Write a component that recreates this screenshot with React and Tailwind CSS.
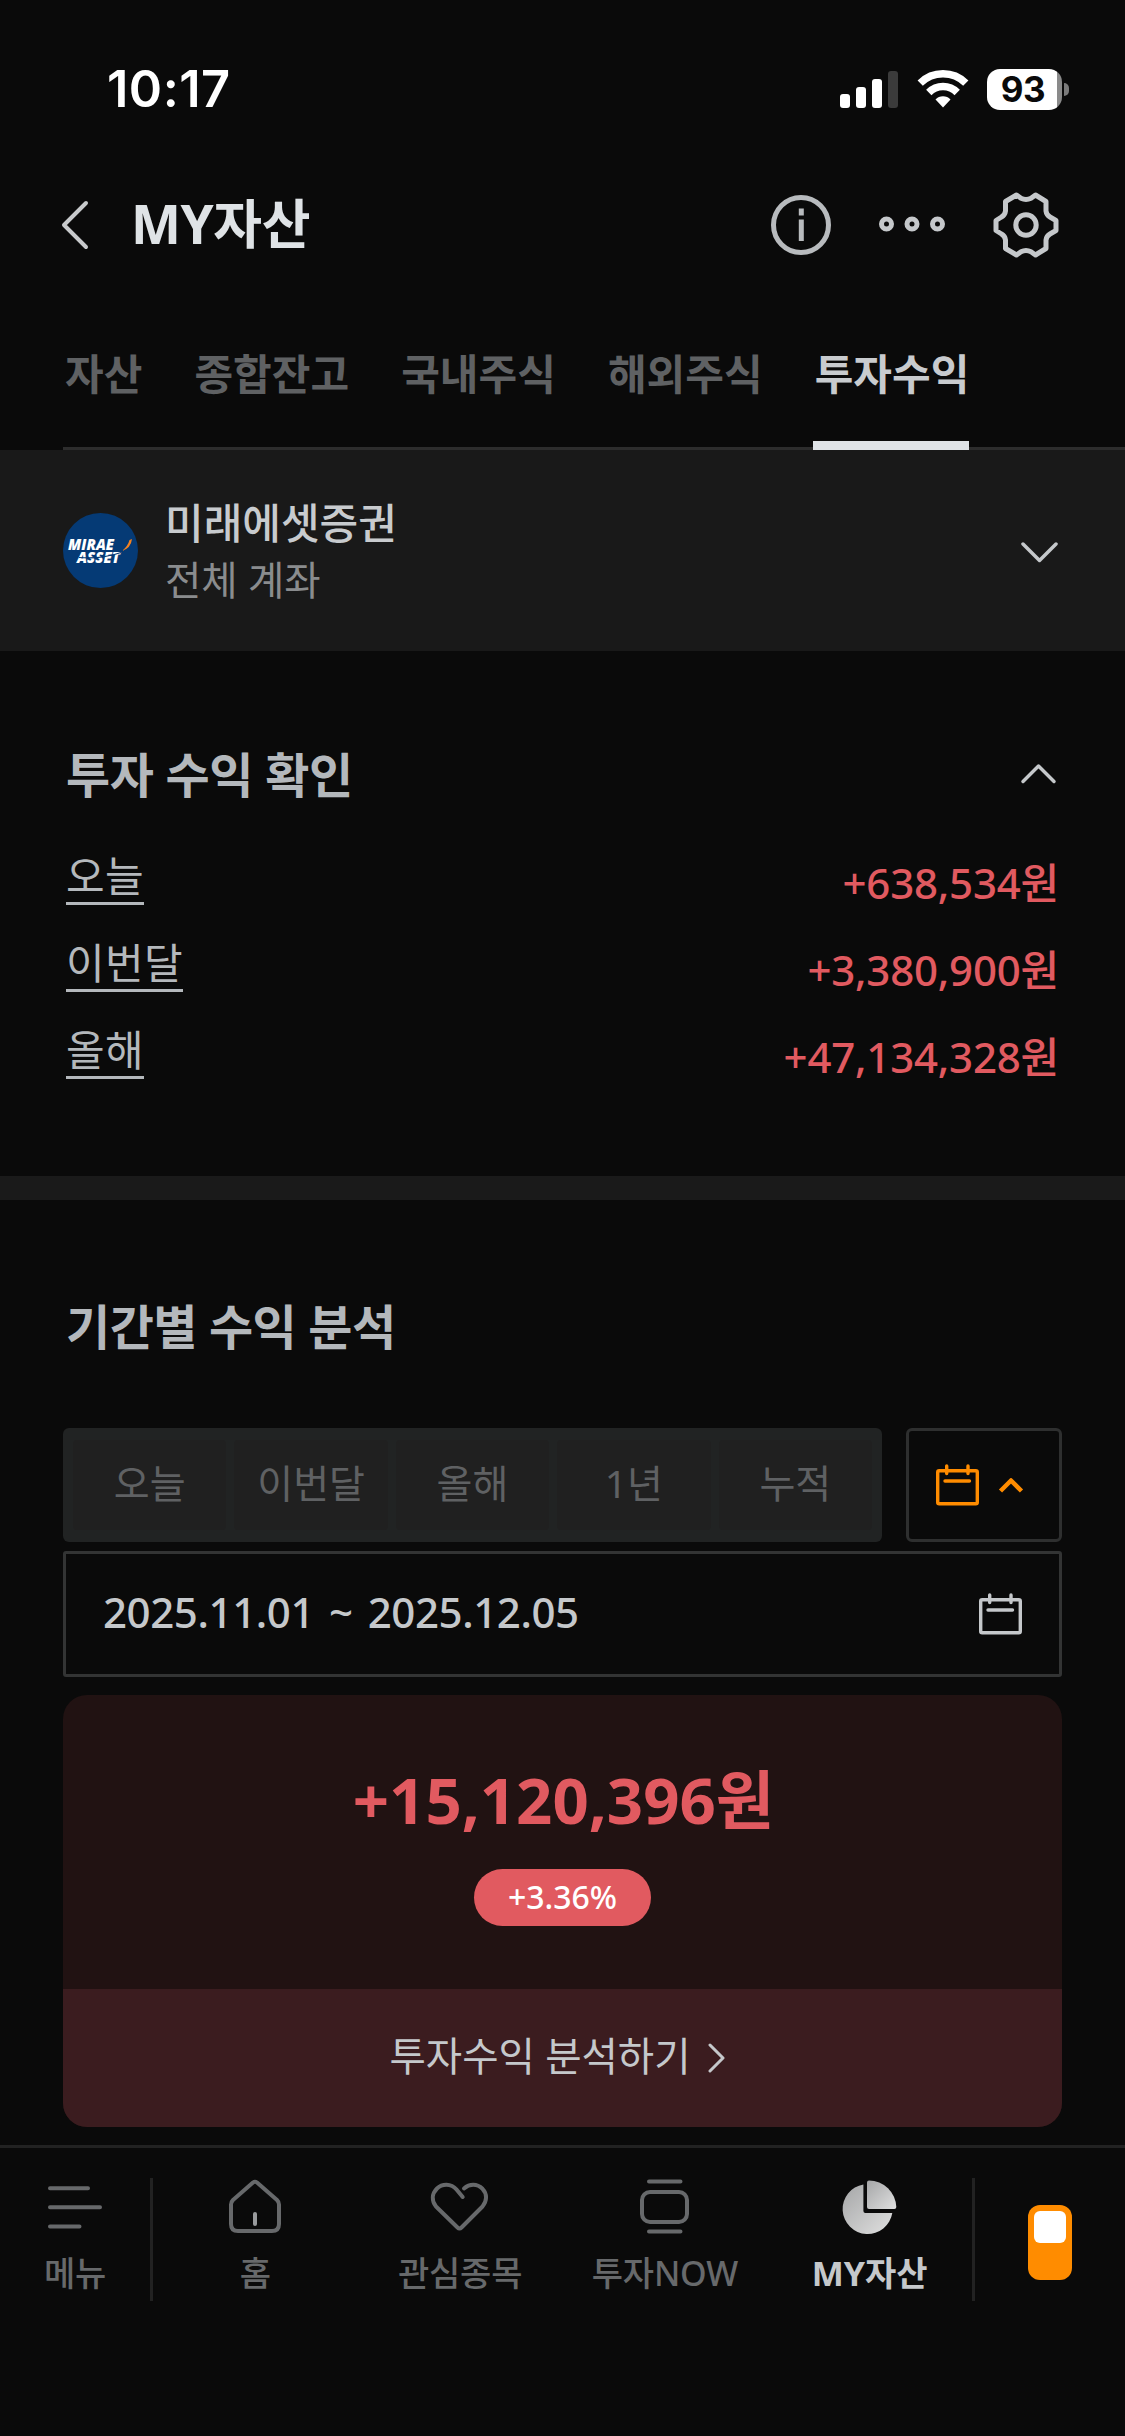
import React from 'react';

const tabs = ['자산', '종합잔고', '국내주식', '해외주식', '투자수익'];

const profits = [
  { label: '오늘', value: '+638,534원' },
  { label: '이번달', value: '+3,380,900원' },
  { label: '올해', value: '+47,134,328원' },
];

const periods = ['오늘', '이번달', '올해', '1년', '누적'];

const StatusBar = () => (
  <div className="h-[150px] shrink-0 pt-[56px] pl-[107px] pr-[56px] flex items-start justify-between font-['Inter',sans-serif]">
    <span className="text-[50.5px] leading-[66px] font-semibold text-white tracking-[0.5px]">10:17</span>
    <div className="flex items-center h-[66px]">
      <svg width="58" height="38" viewBox="0 0 58 38" fill="#fff">
        <rect x="0" y="24" width="10" height="14" rx="3" />
        <rect x="16" y="17" width="10" height="21" rx="3" />
        <rect x="32" y="9" width="10" height="29" rx="3" />
        <rect x="48" y="1" width="10" height="37" rx="3" fill="#3b3b3b" />
      </svg>
      <svg className="ml-[19px]" width="52" height="38" viewBox="0 0 52 38" fill="none" stroke="#fff" strokeWidth="7.5">
        <path d="M3.2 13.2a32.5 32.5 0 0 1 45.6 0" />
        <path d="M11.8 22.5a20 20 0 0 1 28.4 0" />
        <path d="M26 37.5l-7.5-8a10.5 10.5 0 0 1 15 0z" fill="#fff" stroke="none" />
      </svg>
      <div className="ml-[18px] w-[75px] h-[41px] pr-[3px] rounded-[13px] bg-[linear-gradient(90deg,#fff_93%,#8a8a8a_93%)] flex items-center justify-center text-[35px] font-bold text-[#0a0a0a] tracking-[-0.5px]">
        93
      </div>
      <div className="ml-[2px] w-[5px] h-[13px] rounded-r-full bg-[#7a7a7a]" />
    </div>
  </div>
);

const Header = () => (
  <header className="h-[150px] shrink-0 pl-[61px] pr-[66px] flex items-center">
    <svg width="30" height="50" viewBox="0 0 30 50" fill="none" stroke="#c8cacc" strokeWidth="4" strokeLinecap="round" strokeLinejoin="round">
      <path d="M25 3L3 25l22 22" />
    </svg>
    <h1 className="ml-[40px] pb-[3px] text-[53px] leading-[60px] tracking-[-0.4px] font-bold text-[#dfe3e6]">MY자산</h1>
    <div className="ml-auto flex items-center">
      <svg width="60" height="60" viewBox="0 0 60 60" fill="none" stroke="#b8bbbe" strokeWidth="5">
        <circle cx="30" cy="30" r="27.5" />
        <path d="M30.3 13.5v7M30.3 24.5v21.5" />
      </svg>
      <svg className="ml-[47px] -mt-[3px]" width="68" height="16" viewBox="0 0 68 16" fill="none" stroke="#c5c8cb" strokeWidth="5">
        <circle cx="8.5" cy="8" r="5" />
        <circle cx="34" cy="8" r="5" />
        <circle cx="59.5" cy="8" r="5" />
      </svg>
      <svg className="ml-[47px]" width="66" height="66" viewBox="0 0 66 66" fill="none" stroke="#c5c8cb" strokeWidth="5" strokeLinejoin="round">
        <path d="M23.5 3l4.5 3.3q5 2.4 10 0L42.5 3 53 9.5v9.5q.5 4 4 6l6 3.5v10l-6 3.5q-3.500 2-4 6v8.500L42.500 63 38 59.800q-5-2.500-10 0L23.500 63 12.500 56.500v-8.500q-.5-4-4-6L3 38.500v-10l5.500-3.500q3.500-2 4-6V9.500z" />
        <circle cx="33" cy="33" r="10.2" />
      </svg>
    </div>
  </header>
);

const Tabs = () => (
  <nav className="h-[150px] shrink-0 ml-[63px] flex gap-[50.2px] border-b-[3px] border-[#2d2d2d]">
    {tabs.map((tab) => (
      <div
        key={tab}
        className={
          tab === '투자수익'
            ? 'h-[150px] pt-[44px] pl-[2px] border-b-[9px] border-[#dfe3e6] text-[#c8cbce] text-[42px] leading-[60px] font-bold'
            : 'h-[150px] pt-[44px] pl-[2px] text-[#5f6163] text-[42px] leading-[60px] font-bold'
        }
      >
        {tab}
      </div>
    ))}
  </nav>
);

const Chevron = ({ up }) => (
  <svg width="37" height="24" viewBox="0 0 37 24" fill="none" stroke="#c5c8cb" strokeWidth="3.5" strokeLinecap="round" strokeLinejoin="round">
    <path d={up ? 'M3 18.5L18.5 3 34 18.5' : 'M2 5l16.5 16.5L35 5'} />
  </svg>
);

const Account = () => (
  <section className="h-[201px] shrink-0 pl-[63px] pr-[67px] bg-[#191919] flex items-center">
    <svg width="75" height="75" viewBox="0 0 75 75">
      <circle cx="37.5" cy="37.5" r="37.5" fill="#053a75" />
      <text fill="#fff" fontFamily="Open Sans, sans-serif" fontWeight="800" fontStyle="italic" fontSize="15">
        <tspan x="5" y="36.5" textLength="46" lengthAdjust="spacingAndGlyphs">MIRAE</tspan>
        <tspan x="14" y="49.5" textLength="43" lengthAdjust="spacingAndGlyphs">ASSET</tspan>
      </text>
      <path d="M16 44.5q22 2 42-5" fill="none" stroke="#053a75" strokeWidth="1.2" />
      <path d="M69 26q-1 9-10 12 6-5 7.5-11z" fill="#f58220" />
    </svg>
    <div className="ml-[27px]">
      <p className="text-[42px] leading-[58px] font-medium text-[#c8cbce]">미래에셋증권</p>
      <p className="text-[39.5px] leading-[56px] text-[#8a8c8e]">전체 계좌</p>
    </div>
    <div className="ml-auto">
      <Chevron />
    </div>
  </section>
);

const ProfitSummary = () => (
  <section className="h-[525px] shrink-0 pt-[90px] pl-[66px] pr-[66px]">
    <div className="h-[68px] pr-[2px] flex items-center justify-between">
      <h2 className="text-[48px] tracking-[-0.4px] font-bold text-[#b4b8bc]">투자 수익 확인</h2>
      <Chevron up />
    </div>
    <ul className="mt-[32px] flex flex-col gap-[11px]">
      {profits.map((p) => (
        <li key={p.label} className="h-[76px] flex items-start justify-between">
          <span className="h-[64px] text-[42px] leading-[69px] tracking-[0.36px] text-[#b4b8bc] border-b-[3px] border-[#b4b8bc]">{p.label}</span>
          <span className="pt-[7px] text-[42px] leading-[69px] tracking-[-0.2px] font-medium text-[#e15a60]">{p.value}</span>
        </li>
      ))}
    </ul>
  </section>
);

const CalendarIcon = ({ color }) => (
  <svg width="43" height="42" viewBox="0 0 43 42" fill="none" stroke={color} strokeWidth="3.4" strokeLinecap="round" strokeLinejoin="round">
    <rect x="1.7" y="6.7" width="39.6" height="33" rx="1.5" />
    <path d="M10.7 2v7.5M32 2v7.5M9 17h24.5" />
  </svg>
);

const PeriodAnalysis = () => (
  <section className="h-[945px] shrink-0 pt-[94px] px-[63px]">
    <h2 className="pl-[3px] text-[48px] leading-[66px] tracking-[-0.5px] font-bold text-[#b4b8bc]">기간별 수익 분석</h2>

    <div className="mt-[68px] flex gap-[24px]">
      <div className="w-[819px] h-[114px] px-[6px] rounded-[6px] bg-[#212323] grid grid-cols-5 items-center">
        {periods.map((period) => (
          <button key={period} className="mx-[4px] h-[90px] pb-[4px] rounded-[4px] bg-[#202020] text-[39px] text-[#5f6163]">
            {period}
          </button>
        ))}
      </div>
      <button className="w-[156px] h-[114px] pl-[27px] border-[3px] border-[#2e2f2f] rounded-[6px] flex items-center gap-[19px]">
        <CalendarIcon color="#ff8c00" />
        <svg width="26" height="16" viewBox="0 0 26 16" fill="none" stroke="#ff8c00" strokeWidth="4.5" strokeLinejoin="round">
          <path d="M2.5 14L13 3.5 23.5 14" />
        </svg>
      </button>
    </div>

    <div className="mt-[9px] h-[126px] pl-[37px] pr-[37px] border-[3px] border-[#333434] rounded-[3px] flex items-center justify-between">
      <span className="pb-[5px] text-[42px] tracking-[-0.4px] [word-spacing:4.5px] text-[#c5c8cb] font-medium">2025.11.01 ~ 2025.12.05</span>
      <CalendarIcon color="#c5c8cb" />
    </div>

    <div className="mt-[18px] h-[432px] rounded-[24px] overflow-hidden bg-[#211212] flex flex-col">
      <div className="flex-1 flex flex-col items-center pt-[60px]">
        <strong className="pl-[2px] text-[63.5px] leading-[90px] font-bold text-[#e15a60]">+15,120,396원</strong>
        <span className="mt-[24px] w-[177px] h-[57px] rounded-full bg-[#e15a60] text-white text-[32px] leading-[55px] font-medium text-center">+3.36%</span>
      </div>
      <button className="h-[138px] pr-[10px] bg-[#3b1c1f] text-[#c5c8cb] text-[39.5px] flex items-center justify-center gap-[17px]">
        <span className="pb-[3px]">투자수익 분석하기</span>
        <svg width="18" height="30" viewBox="0 0 18 30" fill="none" stroke="#c5c8cb" strokeWidth="3" strokeLinecap="round" strokeLinejoin="round">
          <path d="M2 2l13 13L2 28" />
        </svg>
      </button>
    </div>
  </section>
);

const NavItem = ({ label, active, children }) => (
  <div className="flex flex-col items-center">
    <svg width="60" height="60" viewBox="0 0 60 60" fill="none" stroke="#67696b" strokeWidth="4" strokeLinecap="round" strokeLinejoin="round">
      {children}
    </svg>
    <span className={active ? 'mt-[11px] text-[34px] leading-[48px] font-bold text-[#c5c8cb]' : 'mt-[11px] text-[34px] leading-[48px] tracking-[-0.2px] font-medium text-[#67696b]'}>
      {label}
    </span>
  </div>
);

const BottomNav = () => (
  <nav className="flex-1 flex items-start pt-[30px] border-t-[3px] border-[#222] bg-[#0a0a0a]">
    <div className="w-[150px]">
      <NavItem label="메뉴">
        <path d="M5 10.3h38M5 29.3h50M5 48.5h29.5" />
      </NavItem>
    </div>
    <div className="w-[3px] h-[123px] bg-[#222]" />
    <div className="w-[819px] grid grid-cols-4">
      <NavItem label="홈">
        <path d="M28 4.5q2-1.5 4 0L52 22q2 2 2 4.5V46q0 7-7 7H13q-7 0-7-7V26.5q0-2.5 2-4.5z" />
        <path d="M30 36v10" stroke="#999b9d" />
      </NavItem>
      <NavItem label="관심종목">
        <path d="M32.7 19L26.5 11.5C21 5 12 5.5 7 10.5 1.5 16 1.7 23 6 28.5L27.5 49.5q2 2 4 0L52.5 28.5C57 23 57.5 16 52.5 10.8 47 5.5 39.5 5.7 34 10.5" />
      </NavItem>
      <NavItem label="투자NOW">
        <path d="M14 3.5h31.5M14 53.5h31.5" />
        <rect x="7" y="14" width="45" height="30" rx="8" />
      </NavItem>
      <NavItem label="MY자산" active>
        <defs>
          <linearGradient id="pie" x1="0" y1="0" x2="1" y2="1">
            <stop offset="0" stopColor="#a5a6a7" />
            <stop offset="1" stopColor="#e0e0e0" />
          </linearGradient>
        </defs>
        <path d="M23.4 6.4v26.6q0 2 2 2h26.9A25 25 0 1 1 23.4 6.4z" fill="url(#pie)" stroke="none" />
        <path d="M29 2.5A27.5 27.5 0 0 1 56.3 29q0 2-2 2H29q-2 0-2-2V4.5q0-2 2-2z" fill="url(#pie)" stroke="none" />
      </NavItem>
    </div>
    <div className="w-[3px] h-[123px] bg-[#222]" />
    <div className="ml-[53px] mt-[27px] w-[44px] h-[75px] rounded-[12px] bg-[#ff8c00] flex justify-center pt-[6px]">
      <div className="w-[32px] h-[32px] rounded-[6px] bg-white" />
    </div>
  </nav>
);

const App = () => {
  return (
    <div className="w-[1125px] h-[2436px] overflow-hidden flex flex-col bg-[#0a0a0a] font-['Noto_Sans','Noto_Sans_CJK_KR',sans-serif]">
      <StatusBar />
      <Header />
      <Tabs />
      <Account />
      <ProfitSummary />
      <div className="h-[24px] shrink-0 bg-[#1a1a1a]" />
      <PeriodAnalysis />
      <BottomNav />
    </div>
  );
};

export default App;
